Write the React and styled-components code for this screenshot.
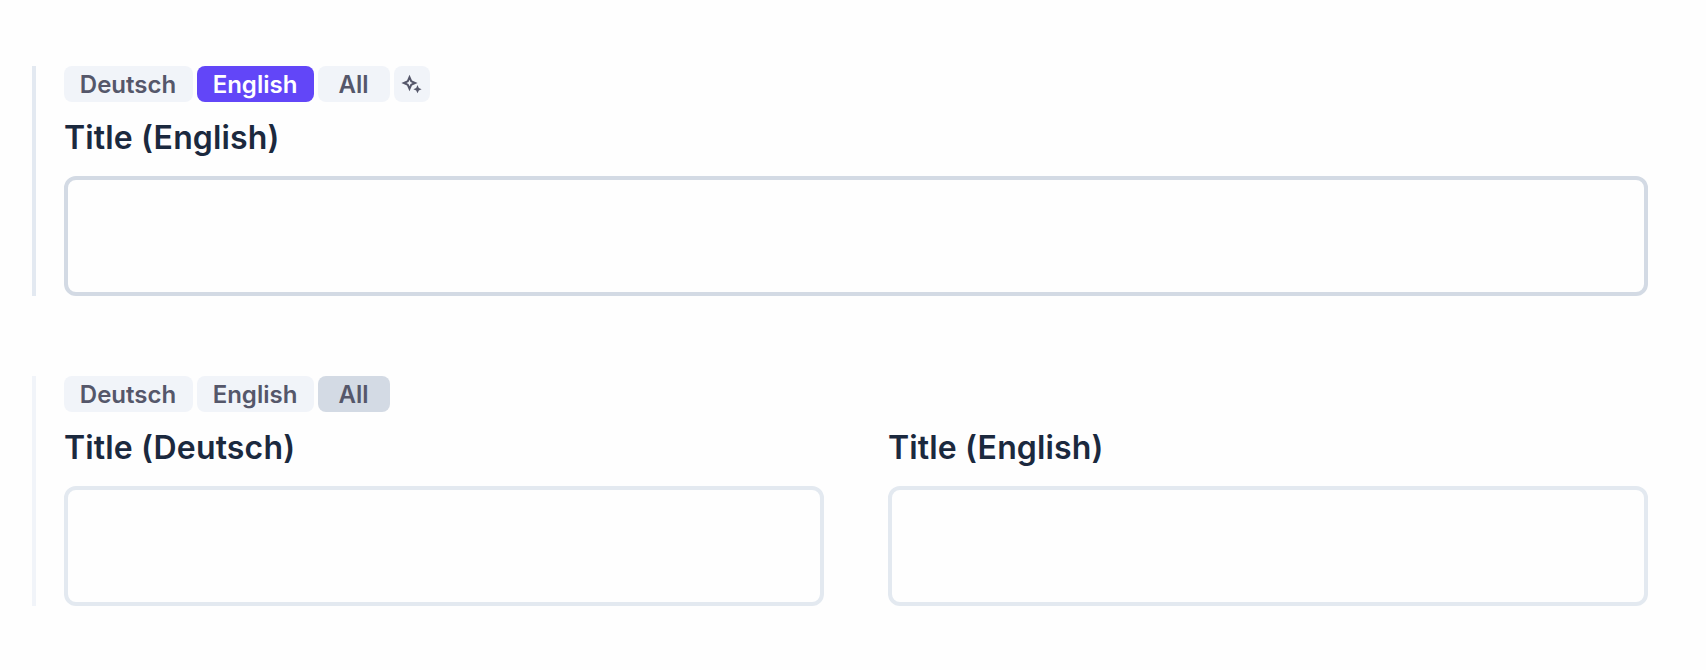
import React from "react";
import styled, { createGlobalStyle } from "styled-components";

const GlobalStyle = createGlobalStyle`
  *, *::before, *::after { box-sizing: border-box; }
  body {
    margin: 0;
    background: #fefefe;
    font-family: Inter, "Liberation Sans", sans-serif;
  }
`;

const Page = styled.main`
  display: flex;
  flex-direction: column;
  gap: 80px;
  padding: 66px 58px 64px 32px;
`;

const Group = styled.section`
  display: flex;
  flex-direction: column;
  height: 230px;
  padding-left: 28px;
  border-left: 4px solid ${(p) => (p.$focused ? "#e3e9f1" : "#f1f4f9")};
`;

const Tabs = styled.div`
  display: flex;
  gap: 4px;
  height: 36px;
`;

const tabColors = {
  idle: ["#f1f4f9", "#55576a"],
  active: ["#6246f8", "#ffffff"],
  selected: ["#d3dae4", "#55576a"],
};

const Tab = styled.button`
  display: flex;
  align-items: center;
  justify-content: center;
  width: ${(p) => p.$width}px;
  height: 36px;
  padding: 0;
  border: 0;
  border-radius: 8px;
  background: ${(p) => tabColors[p.$tone || "idle"][0]};
  color: ${(p) => tabColors[p.$tone || "idle"][1]};
  font: 600 24px/36px Inter, "Liberation Sans", sans-serif;
  white-space: nowrap;
`;

const TabText = styled.span`
  padding: 2px 1px 0 0;
  line-height: 34px;
`;

const Fields = styled.div`
  display: flex;
  gap: 64px;
`;

const Field = styled.label`
  display: flex;
  flex: 1;
  flex-direction: column;
`;

const Label = styled.span`
  height: 74px;
  padding-top: 12px;
  color: #1b293e;
  font-size: 32px;
  font-weight: 600;
  letter-spacing: 0.15px;
  line-height: 48px;
`;

const Input = styled.input`
  width: 100%;
  height: 120px;
  padding: 0 24px;
  border: 4px solid ${(p) => (p.$focused ? "#d3dae4" : "#e3e9f0")};
  border-radius: 12px;
  outline: 0;
  background: #fefefe;
  color: #1b293e;
  font: 400 32px Inter, "Liberation Sans", sans-serif;
`;

function Sparkles() {
  return (
    <svg width="36" height="36" viewBox="0 0 36 36" fill="currentColor" aria-hidden="true">
      <path
        fillRule="evenodd"
        d="M15.5 8.7L18 14.5L23.6 17L18 19.5L15.5 25.3L13 19.5L7.4 17L13 14.5ZM15.5 13.8L14.5 16L12.4 17L14.5 18L15.5 20.2L16.5 18L18.6 17L16.5 16Z"
      />
      <path d="M23.5 19.1L24.8 21.9L27.6 23.2L24.8 24.5L23.5 27.3L22.2 24.5L19.4 23.2L22.2 21.9Z" />
    </svg>
  );
}

function LanguageTab({ children, width, tone }) {
  return (
    <Tab $width={width} $tone={tone}>
      <TabText>{children}</TabText>
    </Tab>
  );
}

function TitleField({ language, focused }) {
  return (
    <Field>
      <Label>Title ({language})</Label>
      <Input type="text" $focused={focused} />
    </Field>
  );
}

export default function App() {
  return (
    <>
      <GlobalStyle />
      <Page>
        <Group $focused>
          <Tabs>
            <LanguageTab width={129}>Deutsch</LanguageTab>
            <LanguageTab width={117} tone="active">English</LanguageTab>
            <LanguageTab width={72}>All</LanguageTab>
            <Tab $width={36} aria-label="Translate">
              <Sparkles />
            </Tab>
          </Tabs>
          <Fields>
            <TitleField language="English" focused />
          </Fields>
        </Group>
        <Group>
          <Tabs>
            <LanguageTab width={129}>Deutsch</LanguageTab>
            <LanguageTab width={117}>English</LanguageTab>
            <LanguageTab width={72} tone="selected">All</LanguageTab>
          </Tabs>
          <Fields>
            <TitleField language="Deutsch" />
            <TitleField language="English" />
          </Fields>
        </Group>
      </Page>
    </>
  );
}
